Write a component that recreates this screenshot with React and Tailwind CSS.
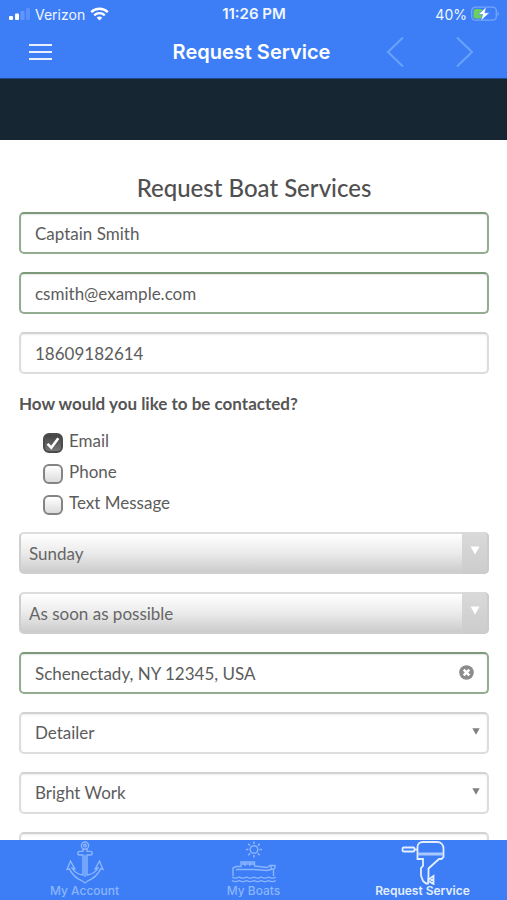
const fieldBase =
  "block h-[42px] w-full appearance-none rounded-[5px] border-2 bg-white px-[14px] text-[17px] text-[#5c5c5c] outline-none";
const validField =
  "border-[#93ad90] border-t-[#7c9a79] shadow-[inset_0_1px_2px_rgba(0,0,0,0.1)]";
const plainField =
  "border-[#dddddd] border-t-[#d2d2d2] shadow-[inset_0_1px_2px_rgba(0,0,0,0.08)]";

function StatusBar() {
  return (
    <div className="grid h-7 grid-cols-3 items-center pr-2 pl-[9px] text-[14px] text-blue-50">
      <div className="flex items-center gap-[5px]">
        <svg width="21" height="13" viewBox="0 0 21 13" aria-hidden="true">
          <rect x="0" y="8" width="4" height="4" rx="1" fill="#fff" />
          <rect x="6" y="5.5" width="4" height="6.5" rx="1" fill="#fff" />
          <rect x="11.5" y="3" width="4" height="9" rx="1" fill="#6296fa" />
          <rect x="17" y="0" width="4" height="12" rx="1" fill="#5a90f9" />
        </svg>
        <span>Verizon</span>
        <svg width="19" height="14" viewBox="0 0 19 14" aria-hidden="true">
          <path
            d="M1.2 5.1a12 12 0 0 1 16.6 0M4.2 8.3a7.6 7.6 0 0 1 10.6 0"
            fill="none"
            stroke="#fff"
            strokeWidth="2.4"
          />
          <path d="M6.7 10.8a4 4 0 0 1 5.6 0L9.5 13.6Z" fill="#fff" />
        </svg>
      </div>
      <span className="text-center text-[15px] leading-5 font-semibold">11:26 PM</span>
      <div className="flex items-center justify-end gap-1">
        <span>40%</span>
        <svg width="28" height="16" viewBox="0 0 28 16" aria-hidden="true">
          <rect x="0.7" y="1.2" width="24.6" height="13" rx="3.6" fill="none" stroke="#75a6fb" strokeWidth="1.3" />
          <path d="M26.6 5.5c1.6.6 1.6 4 0 4.6Z" fill="#75a6fb" />
          <rect x="2.5" y="3" width="9" height="9.5" rx="2" fill="#6bd05e" />
          <path d="M15.5 0.8 7 8.6h4.6l-2 6.4 9-8.2h-4.8Z" fill="#fff" stroke="#3d7ef6" strokeWidth="0.6" />
        </svg>
      </div>
    </div>
  );
}

function NavBar() {
  return (
    <div className="flex h-12 items-center px-7">
      <div className="flex-1">
        <button type="button" aria-label="Menu" className="block">
          <svg width="24" height="18" viewBox="0 0 24 18" aria-hidden="true">
            <path d="M1 2h23M1 9h23M1 16h23" stroke="#e8f0ff" strokeWidth="2.2" />
          </svg>
        </button>
      </div>
      <h1 className="text-[20px] font-semibold text-white">Request Service</h1>
      <div className="flex flex-1 justify-end gap-[50px] pr-1">
        <button type="button" aria-label="Previous">
          <svg width="20" height="32" viewBox="0 0 20 32" fill="none" aria-hidden="true">
            <path d="M18 1.5 3 16l15 14.5" stroke="#68a3fb" strokeWidth="2" />
          </svg>
        </button>
        <button type="button" aria-label="Next">
          <svg width="20" height="32" viewBox="0 0 20 32" fill="none" aria-hidden="true">
            <path d="M2 1.5 17 16 2 30.5" stroke="#68a3fb" strokeWidth="2" />
          </svg>
        </button>
      </div>
    </div>
  );
}

function Checkbox({ label, checked }) {
  return (
    <label className="flex h-[31px] items-center gap-[6px] text-[17px] leading-6 text-[#5c5c5c]">
      <span className="relative mt-1 block size-5">
        <input
          type="checkbox"
          defaultChecked={checked}
          className="peer block size-5 appearance-none rounded-[6px] border-2 border-[#848484] bg-linear-to-b from-white to-[#dcdcdc] checked:border-[#4c4c4c] checked:from-[#444444] checked:to-[#777777]"
        />
        <svg
          className="pointer-events-none absolute inset-0 hidden peer-checked:block"
          width="20"
          height="20"
          viewBox="0 0 20 20"
          aria-hidden="true"
        >
          <path d="m4.5 10.8 3.8 3.9 7-9.4" fill="none" stroke="#fff" strokeWidth="2.6" />
        </svg>
      </span>
      {label}
    </label>
  );
}

function GradientSelect({ label, value }) {
  return (
    <div className="relative">
      <select
        aria-label={label}
        className="block h-[42px] w-full appearance-none rounded-[5px] border-2 border-[#cfcfcf] border-t-[#dddddd] bg-linear-to-b from-white via-[#ebebeb] to-[#cccccc] pt-[2px] pr-8 pl-2 text-[17px] text-[#666666] outline-none"
      >
        <option>{value}</option>
      </select>
      <span className="pointer-events-none absolute inset-y-0 right-0 flex w-[27px] justify-center rounded-r-[5px] border-r-2 border-[#cccccc] bg-linear-to-b from-[#dadada] to-[#cccccc] pt-[14px]">
        <svg width="10" height="9" viewBox="0 0 10 9" aria-hidden="true">
          <path d="M0.5 0.5h9L5 8.5Z" fill="#fff" />
        </svg>
      </span>
    </div>
  );
}

function PlainSelect({ label, value }) {
  return (
    <div className="relative">
      <select aria-label={label} className={`${fieldBase} ${plainField}`}>
        <option>{value}</option>
      </select>
      <svg
        className="pointer-events-none absolute top-4 right-[9px]"
        width="8"
        height="7"
        viewBox="0 0 8 7"
        aria-hidden="true"
      >
        <path d="M0.3 0.3h7.4L4 6.7Z" fill="#808080" />
      </svg>
    </div>
  );
}

function AnchorIcon() {
  return (
    <svg width="40" height="44" viewBox="0 0 40 44" fill="none" stroke="currentColor" strokeWidth="1.4" aria-hidden="true">
      <circle cx="20" cy="4.6" r="3.6" />
      <circle cx="20" cy="4.6" r="1.3" />
      <path d="M18 8v2.4h-3.4a1.7 1.7 0 0 0 0 3.6H18v20c-5-.6-9-3.400-11-7l2.800.8L5.500 20 2 28.500l2.400-.6C7 33.500 12 37.800 17 39.800L20 42l3-2.200c5-2 10-6.300 12.600-11.900l2.400.6L34.500 20l-4.300 7.800L33 27c-2 3.600-6 6.400-11 7V14h3.400a1.700 1.700 0 0 0 0-3.600H22V8" />
      <path d="M20 14v22" />
    </svg>
  );
}

function BoatIcon() {
  return (
    <svg width="46" height="44" viewBox="0 0 46 44" fill="none" stroke="currentColor" strokeWidth="1.4" aria-hidden="true">
      <circle cx="23" cy="8.5" r="3.8" />
      <path d="M23 .5V3M23 14v2.500M15 8.500h2.500M28.500 8.500H31M17.300 2.800l1.800 1.800M26.900 12.400l1.800 1.800M28.700 2.800l-1.800 1.800M19.100 12.400l-1.800 1.800" strokeWidth="1.6" />
      <path d="M2 35v-8l3-1.500h5V21h13.500v4L36 26.500l3-2h5V27l-1.500 1v7" />
      <path d="M11 23h12M14 21v4M19 21v4M5 28.500h18l13 1 6-1.500M40 25v3" />
      <path d="M1 36c2.400 1.500 4.800 1.500 7.200 0 2.400 1.500 4.900 1.500 7.300 0 2.500 1.500 5 1.500 7.500 0 2.400 1.500 4.900 1.500 7.300 0 2.400 1.500 4.900 1.500 7.300 0 2.400 1.500 4.800 1.500 7.200 0M1 39.500c2.400 1.500 4.800 1.500 7.200 0 2.400 1.500 4.900 1.500 7.300 0 2.500 1.500 5 1.500 7.500 0 2.400 1.500 4.900 1.500 7.300 0 2.400 1.500 4.900 1.500 7.300 0 2.400 1.500 4.800 1.500 7.200 0" />
    </svg>
  );
}

function MotorIcon() {
  return (
    <svg width="44" height="44" viewBox="0 0 44 44" fill="none" stroke="currentColor" strokeWidth="1.8" aria-hidden="true">
      <rect x="1.5" y="6.5" width="12" height="4" rx="1.3" />
      <path d="M13.5 8.500h3" />
      <path d="M16.500 11V6a5 5 0 0 1 5-5H36c4 0 6.500 2.800 6.500 6.500V16l-2 2h-2.500L27.500 27.500V34l-.5 8.500h-2L22 40l-2-5.500V27l2-2v-7h-5.500Z" />
      <path d="M17 13h25" stroke="#a9c8ff" strokeWidth="3" />
      <path d="M27.500 38.500 32.500 35v4h-3 3v4l-5-3" />
    </svg>
  );
}

const tabs = [
  { name: "My Account", Icon: AnchorIcon },
  { name: "My Boats", Icon: BoatIcon },
  { name: "Request Service", Icon: MotorIcon, active: true },
];

export default function App() {
  return (
    <div className="flex h-screen flex-col bg-white font-[Lato,sans-serif] text-[#555555]">
      <header className="shrink-0 border-b border-[#1f4a8c] bg-[#3d7ef6] pb-[2px] font-[Inter,sans-serif]">
        <StatusBar />
        <NavBar />
      </header>

      <main className="min-h-0 flex-1 overflow-y-auto [scrollbar-width:none]">
        <div className="h-[61px] bg-[#162733]" />
        <form className="flex flex-col gap-[18px] pt-8 pr-[18px] pl-[19px]">
          <h2 className="-mb-[10px] text-center text-[24px] leading-8 font-medium text-[#505050]">
            Request Boat Services
          </h2>
          <input type="text" aria-label="Name" defaultValue="Captain Smith" className={`${fieldBase} ${validField}`} />
          <input type="email" aria-label="Email address" defaultValue="csmith@example.com" className={`${fieldBase} ${validField}`} />
          <input type="tel" aria-label="Phone number" defaultValue="18609182614" className={`${fieldBase} ${plainField}`} />

          <fieldset className="h-[122px]">
            <legend className="text-[17px] leading-6 font-bold">
              How would you like to be contacted?
            </legend>
            <div className="mt-[9px] pl-6">
              <Checkbox label="Email" checked />
              <Checkbox label="Phone" />
              <Checkbox label="Text Message" />
            </div>
          </fieldset>

          <GradientSelect label="Preferred day" value="Sunday" />
          <GradientSelect label="Timeframe" value="As soon as possible" />

          <div className="relative">
            <input
              type="text"
              aria-label="Location"
              defaultValue="Schenectady, NY 12345, USA"
              className={`${fieldBase} ${validField}`}
            />
            <button type="button" aria-label="Clear location" className="absolute top-[13px] right-[15px]">
              <svg width="15" height="15" viewBox="0 0 15 15" aria-hidden="true">
                <circle cx="7.5" cy="7.5" r="7.3" fill="#8c8c8c" />
                <path d="m4.7 4.7 5.6 5.6M10.3 4.7l-5.6 5.6" stroke="#fff" strokeWidth="2.6" />
              </svg>
            </button>
          </div>

          <PlainSelect label="Service provider" value="Detailer" />
          <PlainSelect label="Service type" value="Bright Work" />
          <PlainSelect label="Boat" value="" />
        </form>
      </main>

      <nav className="grid h-[60px] shrink-0 grid-cols-3 bg-[#3d7ef6] font-[Inter,sans-serif]">
        {tabs.map(({ name, Icon, active }) => (
          <a
            key={name}
            href="#"
            className={`flex flex-col items-center justify-end pb-[1px] text-[12px] leading-4 ${
              active ? "font-semibold text-[#e4eeff]" : "font-medium text-[#8ab6fd]"
            }`}
          >
            <Icon />
            <span className="-mt-[2px]">{name}</span>
          </a>
        ))}
      </nav>
    </div>
  );
}
